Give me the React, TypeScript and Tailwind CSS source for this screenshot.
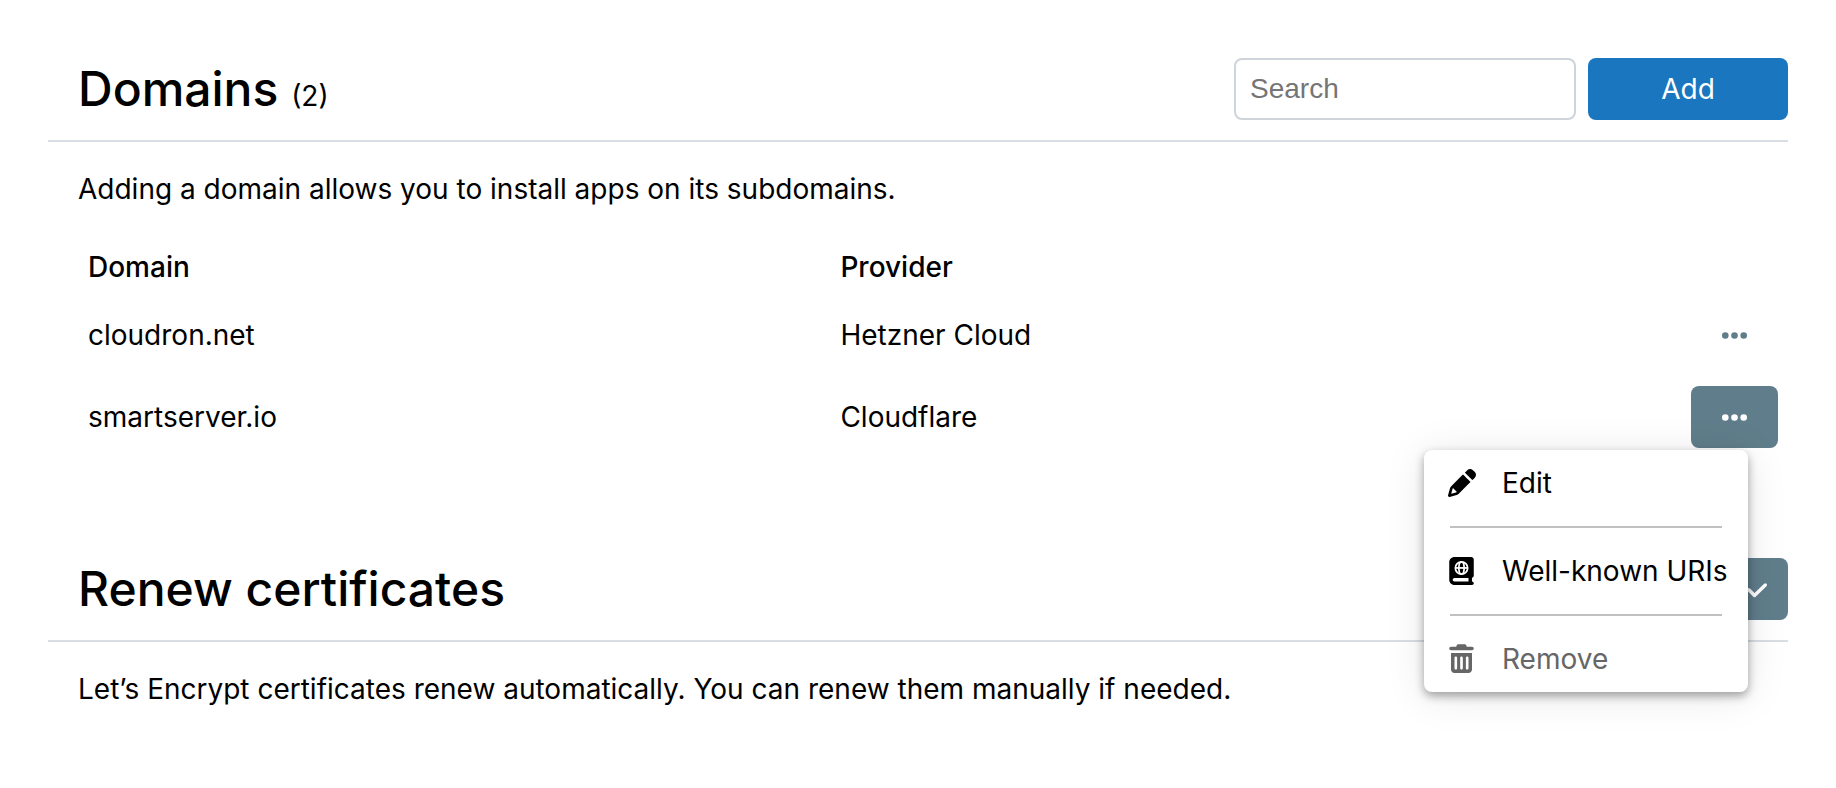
import type { ReactNode } from 'react';

const domains = [
  { domain: 'cloudron.net', provider: 'Hetzner Cloud', open: false },
  { domain: 'smartserver.io', provider: 'Cloudflare', open: true },
];

function PencilIcon() {
  return (
    <svg viewBox="0 0 512 512" className="h-7 w-7 overflow-visible fill-current" aria-hidden="true">
      <path d="M36.4 353.2c4.1-14.6 11.8-27.9 22.6-38.7l181.2-181.2 33.9-33.9c16.6 16.6 51.3 51.3 104 104l33.9 33.9-33.9 33.9-181.2 181.2c-10.7 10.7-24.1 18.5-38.7 22.6L30.4 510.6c-8.3 2.3-17.3 0-23.4-6.2S-1.4 489.3 .9 481L36.4 353.2zm55.6-3.7c-4.4 4.7-7.6 10.4-9.3 16.6l-24.1 86.9 86.9-24.1c6.4-1.8 12.2-5.1 17-9.7L91.9 349.5zm354-146.1c-16.6-16.6-51.3-51.3-104-104L308 65.5C334.5 39 349.4 24.1 352.8 20.7 366.4 7.1 384.8-.5 404-.5S441.6 7.1 455.2 20.7l35.7 35.7C504.4 69.9 512 88.3 512 107.4s-7.6 37.6-21.2 51.1c-3.4 3.4-18.3 18.3-44.8 44.9z" />
    </svg>
  );
}

function AtlasIcon() {
  return (
    <svg viewBox="0 0 448 512" className="h-7 w-[25px] overflow-visible fill-current" aria-hidden="true">
      <path d="M384 512L96 512c-53 0-96-43-96-96L0 96C0 43 43 0 96 0L400 0c26.5 0 48 21.5 48 48l0 288c0 20.9-13.4 38.7-32 45.3l0 66.7c17.7 0 32 14.3 32 32s-14.3 32-32 32l-32 0zM96 384c-17.7 0-32 14.3-32 32s14.3 32 32 32l256 0 0-64L96 384z" />
      <g className="fill-none stroke-white" strokeWidth="32">
        <circle cx="224" cy="200" r="112" />
        <ellipse cx="224" cy="200" rx="48" ry="112" />
        <path d="M112 200h224" />
      </g>
    </svg>
  );
}

function TrashIcon() {
  return (
    <svg viewBox="0 0 448 512" className="h-7 w-[25px] overflow-visible fill-current" aria-hidden="true">
      <path d="M136.7 5.9C141.1-7.2 153.3-16 167.1-16l113.9 0c13.8 0 26 8.8 30.4 21.9L320 32 416 32c17.7 0 32 14.3 32 32s-14.3 32-32 32L32 96C14.3 96 0 81.7 0 64S14.3 32 32 32l96 0 8.7-26.1zM32 144l384 0 0 304c0 35.3-28.7 64-64 64L96 512c-35.3 0-64-28.7-64-64l0-304zm88 64c-13.3 0-24 10.7-24 24l0 192c0 13.3 10.7 24 24 24s24-10.7 24-24l0-192c0-13.3-10.7-24-24-24zm104 0c-13.3 0-24 10.7-24 24l0 192c0 13.3 10.7 24 24 24s24-10.7 24-24l0-192c0-13.3-10.7-24-24-24zm104 0c-13.3 0-24 10.7-24 24l0 192c0 13.3 10.7 24 24 24s24-10.7 24-24l0-192c0-13.3-10.7-24-24-24z" />
    </svg>
  );
}

function EllipsisIcon() {
  return (
    <svg viewBox="0 0 25 7" className="h-[7px] w-[25px] fill-current" aria-hidden="true">
      <circle cx="3.3" cy="3.5" r="3.3" />
      <circle cx="12.5" cy="3.5" r="3.3" />
      <circle cx="21.7" cy="3.5" r="3.3" />
    </svg>
  );
}

function CheckIcon() {
  return (
    <svg viewBox="0 0 24 24" className="h-6 w-6 fill-none stroke-current" aria-hidden="true">
      <path d="M3.8 12.8l5.7 5.7L20.3 8" strokeWidth="3.4" strokeLinecap="round" strokeLinejoin="round" />
    </svg>
  );
}

function Section({ title, controls, children }: { title: ReactNode; controls: ReactNode; children: ReactNode }) {
  return (
    <section>
      <header className="flex items-center justify-between border-b-2 border-[#d8dee4] pb-5 pl-[30px]">
        <h2 className="text-[48px] leading-[62px] font-medium">{title}</h2>
        <div className="flex gap-3">{controls}</div>
      </header>
      <div className="pt-[30px] pl-[30px]">{children}</div>
    </section>
  );
}

function MenuItem({ icon, label, disabled }: { icon: ReactNode; label: string; disabled?: boolean }) {
  return (
    <button
      type="button"
      role="menuitem"
      disabled={disabled}
      className="flex h-[66px] w-full items-center gap-[23px] px-5 whitespace-nowrap disabled:text-[#666666]"
    >
      <span className="flex w-[35px] shrink-0 justify-center">{icon}</span>
      {label}
    </button>
  );
}

function Menu() {
  return (
    <div
      role="menu"
      className="absolute top-full right-[30px] z-10 mt-0.5 w-[324px] rounded-lg bg-white text-left shadow-[0_4px_10px_rgba(0,0,0,0.35),0_4px_40px_rgba(0,0,0,0.1)]"
    >
      <MenuItem icon={<PencilIcon />} label="Edit" />
      <hr className="mx-[26px] my-[10px] border-t-2 border-[#c0c0c0]" />
      <MenuItem icon={<AtlasIcon />} label="Well-known URIs" />
      <hr className="mx-[26px] my-[10px] border-t-2 border-[#c0c0c0]" />
      <MenuItem icon={<TrashIcon />} label="Remove" disabled />
    </div>
  );
}

export default function App() {
  return (
    <main className="min-h-screen bg-white px-12 pt-[58px] pb-20 font-['Inter',sans-serif] text-[28px] leading-[34px] text-black">
      <div className="flex flex-col gap-[100px]">
        <Section
          title={
            <>
              Domains <span className="text-[28px] leading-none font-normal">(2)</span>
            </>
          }
          controls={
            <>
              <input
                type="search"
                aria-label="Search"
                placeholder="Search"
                className="h-[62px] w-[342px] rounded-lg border-2 border-[#ced4da] bg-white px-[14px] font-['Liberation_Sans',sans-serif] outline-none placeholder:text-[#757575]"
              />
              <button type="button" className="h-[62px] w-[200px] rounded-lg bg-[#1a76bf] text-white">
                Add
              </button>
            </>
          }
        >
          <p>Adding a domain allows you to install apps on its subdomains.</p>
          <table className="mt-[34px] w-full table-fixed text-left">
            <thead>
              <tr>
                <th className="w-[44%] p-[10px] font-medium">Domain</th>
                <th className="p-[10px] font-medium">Provider</th>
                <th className="w-[107px]" aria-label="Actions" />
              </tr>
            </thead>
            <tbody>
              {domains.map((row) => (
                <tr key={row.domain}>
                  <td className="p-[10px]">{row.domain}</td>
                  <td className="p-[10px]">{row.provider}</td>
                  <td className="p-[10px]">
                    <div className="relative">
                      <button
                        type="button"
                        aria-label={`Actions for ${row.domain}`}
                        aria-expanded={row.open}
                        className={
                          row.open
                            ? 'flex h-[62px] w-full items-center justify-center rounded-lg bg-[#607d8b] text-white'
                            : 'flex h-[62px] w-full items-center justify-center rounded-lg text-[#607d8b]'
                        }
                      >
                        <EllipsisIcon />
                      </button>
                      {row.open && <Menu />}
                    </div>
                  </td>
                </tr>
              ))}
            </tbody>
          </table>
        </Section>
        <Section
          title="Renew certificates"
          controls={
            <button
              type="button"
              aria-label="Renew all certificates"
              className="flex h-[62px] w-[62px] items-center justify-center rounded-lg bg-[#607d8b] text-white"
            >
              <CheckIcon />
            </button>
          }
        >
          <p>Let’s Encrypt certificates renew automatically. You can renew them manually if needed.</p>
        </Section>
      </div>
    </main>
  );
}
